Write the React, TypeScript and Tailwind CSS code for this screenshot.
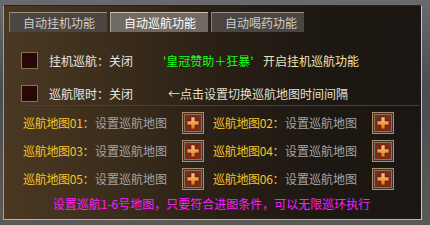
import React from 'react';

const cjk = { fontFamily: '"Noto Sans CJK SC", "Noto Sans", sans-serif' };

function PlusButton() {
  return (
    <div className="w-[22px] h-[22px] border border-[#b88a62] bg-[#3a3430] p-[1px] shrink-0">
      <div className="w-full h-full border border-[#7a7670] bg-[#7a2c18] flex items-center justify-center">
        <svg width="14" height="14" viewBox="0 0 14 14">
          <defs>
            <linearGradient id="pg" x1="0" y1="0" x2="0" y2="1">
              <stop offset="0" stopColor="#ffd080" />
              <stop offset="1" stopColor="#e07020" />
            </linearGradient>
          </defs>
          <path d="M5 1h4v4h4v4h-4v4h-4v-4h-4v-4h4z" fill="url(#pg)" stroke="#5a1a08" strokeWidth="0.6" />
        </svg>
      </div>
    </div>
  );
}

function MapCell({ n }: { n: string }) {
  return (
    <div className="flex items-center h-[22px] whitespace-nowrap">
      <span className="w-[72px] text-[#f4c42a] tracking-[-0.3px]">巡航地图{n}：</span>
      <span className="w-[87px] text-[#a4a4a4]">设置巡航地图</span>
      <PlusButton />
    </div>
  );
}

function Checkbox() {
  return <div className="w-[17px] h-[17px] border border-[#8e7052] bg-[#2a0707] shrink-0" />;
}

export default function App() {
  const tabs = [
    { label: '自动挂机功能', active: false, w: 'w-[98px]' },
    { label: '自动巡航功能', active: true, w: 'w-[98px]' },
    { label: '自动喝药功能', active: false, w: 'w-[93px]' },
  ];

  return (
    <div
      className="w-[430px] h-[225px] bg-[#56585e] bg-[linear-gradient(180deg,#6a6a6e_0%,#4a4c52_40%,#5c5a58_100%)] pt-[5px] pl-[3px] pr-[8px] pb-[5px] text-[12px] leading-none whitespace-nowrap"
      style={cjk}
    >
      <div className="w-full h-full border-l border-r border-b border-t border-l-[#a89e88] border-r-[#c4c4cc] border-b-[#b4b4bc] border-t-[#2a2420] bg-[linear-gradient(90deg,#4a3822_0%,#3c2e1c_25%,#2a2016_50%,#1e1813_75%,#1c1612_100%)] flex flex-col">
        {/* tabs */}
        <div className="flex gap-[3px] pl-[5px] pt-[6px]">
          {tabs.map((t) => (
            <div
              key={t.label}
              className={`${t.w} h-[20px] flex items-center pl-[13px] border-t border-l ${
                t.active
                  ? 'bg-[#716a62] border-t-[#c8c0b0] border-l-[#b0a898] text-white'
                  : 'bg-[#4c4640] border-t-[#9a9284] border-l-[#857c70] text-[#cccccc]'
              }`}
            >
              {t.label}
            </div>
          ))}
        </div>

        {/* options */}
        <div className="flex flex-col gap-[16px] pl-[17px] pt-[20px]">
          <div className="flex items-center">
            <Checkbox />
            <span className="ml-[11px] w-[114px] text-[#e8e8e8]">挂机巡航：关闭</span>
            <span className="w-[100px] text-[#18ff18]">'皇冠赞助＋狂暴'</span>
            <span className="text-[#ece4b0]">开启挂机巡航功能</span>
          </div>
          <div className="flex items-center">
            <Checkbox />
            <span className="ml-[11px] w-[119px] text-[#e8e8e8]">巡航限时：关闭</span>
            <span className="text-[#e4e0cc]">←点击设置切换巡航地图时间间隔</span>
          </div>
        </div>

        <div className="ml-[16px] mr-[2px] mt-[3px] h-px bg-[#4a4038]" />

        {/* maps */}
        <div className="grid grid-cols-[190px_auto] gap-y-[6px] pl-[19px] pt-[6px]">
          <MapCell n="01" />
          <MapCell n="02" />
          <MapCell n="03" />
          <MapCell n="04" />
          <MapCell n="05" />
          <MapCell n="06" />
        </div>

        <div className="mt-[8px] text-center text-[#ff1cff] pr-[2px]">
          设置巡航1-6号地图，只要符合进图条件，可以无限巡环执行
        </div>
      </div>
    </div>
  );
}
